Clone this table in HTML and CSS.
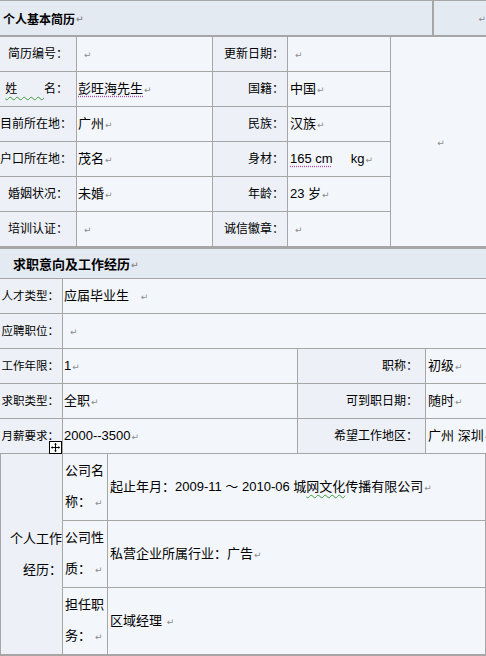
FILE: index.html
```html
<!DOCTYPE html>
<html lang="zh-CN">
<head>
<meta charset="utf-8">
<title>个人基本简历</title>
<link rel="stylesheet" href="styles.css">
</head>
<body>
<div class="doc">
  <div class="hdr1">
    <div class="hdr-main">个人基本简历<span class="pm">↵</span></div>
    <div class="hdr-side"><span class="pm">↵</span></div>
  </div>

  <div class="g1">
    <div class="c lab l1">简历编号：</div>
    <div class="c val empty"><span class="pm">↵</span></div>
    <div class="c lab l3">更新日期：</div>
    <div class="c val v4 empty"><span class="pm">↵</span></div>
    <div class="c photo"><span class="pm">↵</span></div>

    <div class="c lab l1"><span class="wavy">姓&nbsp;&nbsp;&nbsp;&nbsp;&nbsp;&nbsp;&nbsp;&nbsp;</span>名：</div>
    <div class="c val"><span class="dotted">彭旺海先生</span><span class="pm">↵</span></div>
    <div class="c lab l3">国籍：</div>
    <div class="c val v4">中国<span class="pm">↵</span></div>

    <div class="c lab l1 long">目前所在地：</div>
    <div class="c val">广州<span class="pm">↵</span></div>
    <div class="c lab l3">民族：</div>
    <div class="c val v4">汉族<span class="pm">↵</span></div>

    <div class="c lab l1 long">户口所在地：</div>
    <div class="c val">茂名<span class="pm">↵</span></div>
    <div class="c lab l3">身材：</div>
    <div class="c val v4"><span class="dotted">165 cm</span><span class="sp">     </span>kg<span class="pm">↵</span></div>

    <div class="c lab l1">婚姻状况：</div>
    <div class="c val">未婚<span class="pm">↵</span></div>
    <div class="c lab l3">年龄：</div>
    <div class="c val v4">23 岁<span class="pm">↵</span></div>

    <div class="c lab l1">培训认证：</div>
    <div class="c val empty"><span class="pm">↵</span></div>
    <div class="c lab l3">诚信徽章：</div>
    <div class="c val v4 empty"><span class="pm">↵</span></div>
  </div>

  <div class="hdr2">求职意向及工作经历<span class="pm">↵</span></div>

  <div class="g2">
    <div class="c lab m1">人才类型：</div>
    <div class="c val wide">应届毕业生<span class="sp">   </span><span class="pm">↵</span></div>

    <div class="c lab m1">应聘职位：</div>
    <div class="c val wide empty"><span class="pm">↵</span></div>

    <div class="c lab m1">工作年限：</div>
    <div class="c val">1<span class="pm">↵</span></div>
    <div class="c lab m3">职称：</div>
    <div class="c val last">初级<span class="pm">↵</span></div>

    <div class="c lab m1">求职类型：</div>
    <div class="c val">全职<span class="pm">↵</span></div>
    <div class="c lab m3">可到职日期：</div>
    <div class="c val last">随时<span class="pm">↵</span></div>

    <div class="c lab m1">月薪要求：</div>
    <div class="c val">2000--3500<span class="pm">↵</span></div>
    <div class="c lab m3">希望工作地区：</div>
    <div class="c val last">广州<span class="sp"> </span>深圳<span class="pm">↵</span></div>
  </div>

  <div class="g3">
    <div class="c lab exp"><div class="txt">个人工作经历：</div></div>
    <div class="c sub"><div class="txt">公司名称：<span class="pm">↵</span></div></div>
    <div class="c val det">起止年月：2009-11 ～ 2010-06 城<span class="wavy">网文化</span>传播有限公司<span class="pm">↵</span></div>
    <div class="c sub"><div class="txt">公司性质：<span class="pm">↵</span></div></div>
    <div class="c val det">私营企业所属行业：广告<span class="pm">↵</span></div>
    <div class="c sub lastrow"><div class="txt">担任职务：<span class="pm">↵</span></div></div>
    <div class="c val det lastrow">区域经理<span class="sp"> </span><span class="pm">↵</span></div>
  </div>

  <div class="handle" aria-hidden="true">
    <svg width="13" height="13" viewBox="0 0 13 13">
      <rect x="0.5" y="0.5" width="12" height="12" fill="#fff" stroke="#000"/>
      <path d="M6.5 2.5v8M2.5 6.5h8" stroke="#000" stroke-width="1" fill="none"/>
      <path d="M6.5 2 L5 3.5 H8 Z M6.5 11 L5 9.5 H8 Z M2 6.5 L3.5 5 V8 Z M11 6.5 L9.5 5 V8 Z" fill="#000"/>
    </svg>
  </div>
</div>
</body>
</html>
```

FILE: styles.css
```css
html, body {
  margin: 0;
  padding: 0;
  background: #ffffff;
}

body {
  width: 486px;
  height: 656px;
  overflow: hidden;
  font-family: "Liberation Sans", "Noto Sans CJK SC", sans-serif;
  font-size: 13px;
  color: #000;
}

.doc {
  position: relative;
  width: 486px;
}

.pm {
  font-family: "DejaVu Sans", sans-serif;
  font-size: 9px;
  color: #8c8c8c;
  margin-left: 1px;
  position: relative;
  top: 1px;
}

.sp {
  white-space: pre;
}

.wavy {
  text-decoration: underline wavy #3c9a3c;
  text-decoration-thickness: 1px;
  text-underline-offset: 3px;
}

.dotted {
  text-decoration: underline dotted #b04ab0;
  text-underline-offset: 3px;
}

/* Section headers */
.hdr1 {
  display: flex;
  height: 37px;
  box-sizing: border-box;
  border-top: 1px solid #a6a6a6;
  border-bottom: 2px solid #a6a6a6;
  background: #e4eaf2;
}

.hdr-main {
  width: 434px;
  box-sizing: border-box;
  border-right: 2px solid #a6a6a6;
  display: flex;
  align-items: center;
  padding-left: 3px;
  font-weight: bold;
  font-size: 12px;
}

.hdr-side {
  flex: 1;
  display: flex;
  align-items: center;
  justify-content: flex-end;
}

.hdr2 {
  height: 32px;
  box-sizing: border-box;
  border-top: 2px solid #a6a6a6;
  border-bottom: 1px solid #a6a6a6;
  background: #e4eaf2;
  display: flex;
  align-items: center;
  padding-left: 13px;
  font-weight: bold;
  font-size: 13px;
}

/* Cells */
.c {
  box-sizing: border-box;
  border-right: 1px solid #a6a6a6;
  border-bottom: 1px solid #a6a6a6;
  display: flex;
  align-items: center;
  white-space: nowrap;
  background: #f3f6fa;
  line-height: 16px;
}

.lab {
  background: #edf1f7;
  justify-content: flex-end;
  font-size: 12px;
}

.val {
  padding-left: 1px;
}

.val.empty {
  padding-left: 6px;
}

/* Basic info grid */
.g1 {
  display: grid;
  grid-template-columns: 77px 136px 75px 103px 95px;
  grid-auto-rows: 35px;
}

.l1 {
  padding-right: 8px;
}

.l1.long {
  padding-right: 4px;
}

.l3 {
  padding-right: 3px;
}

.v4 {
  padding-left: 2px;
}

.photo {
  grid-column: 5;
  grid-row: 1 / span 6;
  justify-content: center;
  border-right: none;
  padding-left: 4px;
}

/* Intention grid */
.g2 {
  display: grid;
  grid-template-columns: 63px 235px 128px 60px;
  grid-auto-rows: 35px;
}

.m1 {
  font-size: 11.5px;
  padding-right: 3px;
}

.m3 {
  padding-right: 7px;
}

.wide {
  grid-column: 2 / span 3;
  border-right: none;
}

.last {
  border-right: none;
  padding-left: 2px;
  overflow: hidden;
}

/* Experience grid */
.g3 {
  display: grid;
  grid-template-columns: 63px 45px 378px;
  grid-template-rows: 67px 67px 68px;
}

.txt {
  white-space: normal;
  width: 100%;
}

.exp {
  grid-row: 1 / span 3;
  border-left: 1px solid #a6a6a6;
  border-bottom: 2px solid #a6a6a6;
  font-size: 13px;
  line-height: 31px;
  padding-left: 8px;
  padding-right: 0;
}

.exp .txt {
  text-align: right;
}

.sub {
  line-height: 31px;
  padding-left: 2px;
  padding-right: 1px;
}

.sub .txt {
  text-align: left;
}

.sub .pm {
  margin-left: 4px;
  top: 0;
}

.det {
  padding-left: 2px;
}

.lastrow {
  border-bottom: 2px solid #a6a6a6;
}

.handle {
  position: absolute;
  left: 49px;
  top: 441px;
  width: 13px;
  height: 13px;
  line-height: 0;
}
```
